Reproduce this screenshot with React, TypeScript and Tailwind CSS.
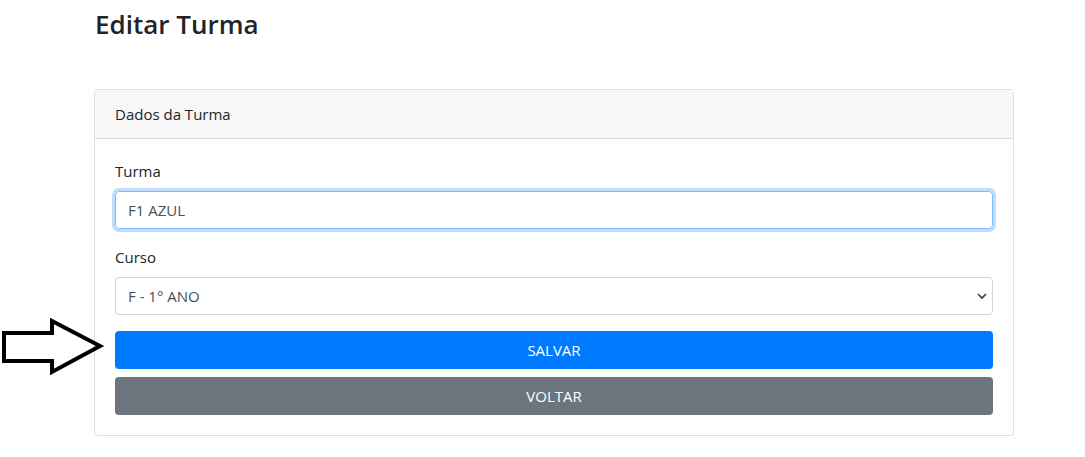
import React from 'react';

function ArrowMarker() {
  return (
    <svg
      className="absolute left-0 top-[318px]"
      width="106"
      height="58"
      viewBox="0 0 106 58"
      fill="none"
    >
      <path
        d="M4 15 H52 V3 L100 28 L52 54 V43 H4 Z"
        stroke="#000"
        strokeWidth="4"
        strokeLinejoin="miter"
      />
    </svg>
  );
}

export default function App() {
  return (
    <div
      className="relative min-h-[457px] bg-white text-[#212529]"
      style={{ fontFamily: '"Open Sans", "Noto Sans", Arial, sans-serif' }}
    >
      <ArrowMarker />
      <div className="ml-[94px] w-[920px] pt-[8px]">
        <h3 className="mb-[48px] pl-[1px] text-[26px] font-semibold leading-[33px] text-[#212529]">
          Editar Turma
        </h3>

        <div className="rounded-[4px] border border-black/[0.125] bg-white">
          <div className="border-b border-black/[0.125] bg-[#f7f7f7] px-[20px] py-[12px] text-[15px] leading-[24px]">
            Dados da Turma
          </div>

          <div className="p-[20px]">
            <div className="mb-[16px]">
              <label className="mb-[8px] block text-[15px] leading-[24px]">Turma</label>
              <input
                type="text"
                defaultValue="F1 AZUL"
                className="block h-[38px] w-full rounded-[4px] border border-[#80bdff] px-[12px] text-[15px] text-[#495057] shadow-[0_0_0_3px_rgba(0,123,255,0.25)] outline-none"
              />
            </div>

            <div className="mb-[16px]">
              <label className="mb-[8px] block text-[15px] leading-[24px]">Curso</label>
              <div className="relative">
                <select
                  defaultValue="f1"
                  className="block h-[38px] w-full appearance-none rounded-[4px] border border-[#ced4da] bg-white px-[12px] text-[15px] text-[#495057] outline-none"
                >
                  <option value="f1">F - 1° ANO</option>
                </select>
                <svg
                  className="pointer-events-none absolute right-[6px] top-[15px]"
                  width="10"
                  height="8"
                  viewBox="0 0 10 8"
                  fill="none"
                >
                  <path d="M1 2 L5 6 L9 2" stroke="#343a40" strokeWidth="1.6" />
                </svg>
              </div>
            </div>

            <button className="block h-[38px] w-full rounded-[4px] bg-[#007bff] text-[15px] text-white">
              SALVAR
            </button>
            <button className="mt-[8px] block h-[38px] w-full rounded-[4px] bg-[#6c757d] text-[15px] text-white">
              VOLTAR
            </button>
          </div>
        </div>
      </div>
    </div>
  );
}
